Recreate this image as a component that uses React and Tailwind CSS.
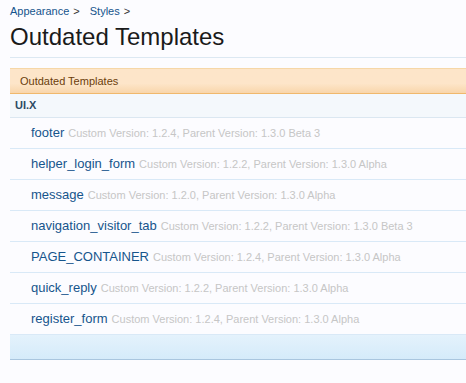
import React from "react";

const rows = [
  { name: "footer", custom: "1.2.4", parent: "1.3.0 Beta 3" },
  { name: "helper_login_form", custom: "1.2.2", parent: "1.3.0 Alpha" },
  { name: "message", custom: "1.2.0", parent: "1.3.0 Alpha" },
  { name: "navigation_visitor_tab", custom: "1.2.2", parent: "1.3.0 Beta 3" },
  { name: "PAGE_CONTAINER", custom: "1.2.4", parent: "1.3.0 Alpha" },
  { name: "quick_reply", custom: "1.2.2", parent: "1.3.0 Alpha" },
  { name: "register_form", custom: "1.2.4", parent: "1.3.0 Alpha" },
];

export default function App() {
  return (
    <div
      className="min-h-[383px] bg-[#fcfcff] pl-[10px]"
      style={{ fontFamily: "'Liberation Sans', Arial, sans-serif" }}
    >
      {/* Breadcrumb + title */}
      <header className="pt-[4px]">
        <div className="text-[11px] leading-[14px] text-[#15548c]">
          <span>Appearance</span>
          <span className="ml-[4px] text-[#333]">&gt;</span>
          <span className="ml-[10px]">Styles</span>
          <span className="ml-[4px] text-[#333]">&gt;</span>
        </div>
        <h1 className="mt-[4px] text-[24px] leading-[30px] text-[#1a1a1a]">
          Outdated Templates
        </h1>
      </header>

      <div className="mt-[5px] border-t border-[#dce8f2]" />

      {/* List */}
      <div className="mt-[10px]">
        <div className="h-[26px] flex items-center pl-[10px] text-[11px] text-[#6b3d0a] bg-gradient-to-b from-[#fde5c9] from-60% to-[#f8d6ab] border-t border-[#f6d7a7] border-b border-b-[#f0b86c]">
          Outdated Templates
        </div>
        <div className="h-[24px] flex items-center pl-[5px] text-[11px] font-bold text-[#2d4a63] bg-[#f4f8fc] border-b border-[#dbe7f1]">
          UI.X
        </div>
        {rows.map((r) => (
          <div
            key={r.name}
            className="h-[31px] flex items-center pl-[21px] border-b border-[#d9e9f7] whitespace-nowrap"
          >
            <span className="text-[13px] text-[#16558c]">{r.name}</span>
            <span className="ml-[4px] text-[11px] text-[#c6c6c6]">
              Custom Version: {r.custom}, Parent Version: {r.parent}
            </span>
          </div>
        ))}
        <div className="h-[25px] bg-gradient-to-b from-[#e4f2fc] to-[#d5ebfa] border-b border-[#a9c6df]" />
      </div>
    </div>
  );
}
